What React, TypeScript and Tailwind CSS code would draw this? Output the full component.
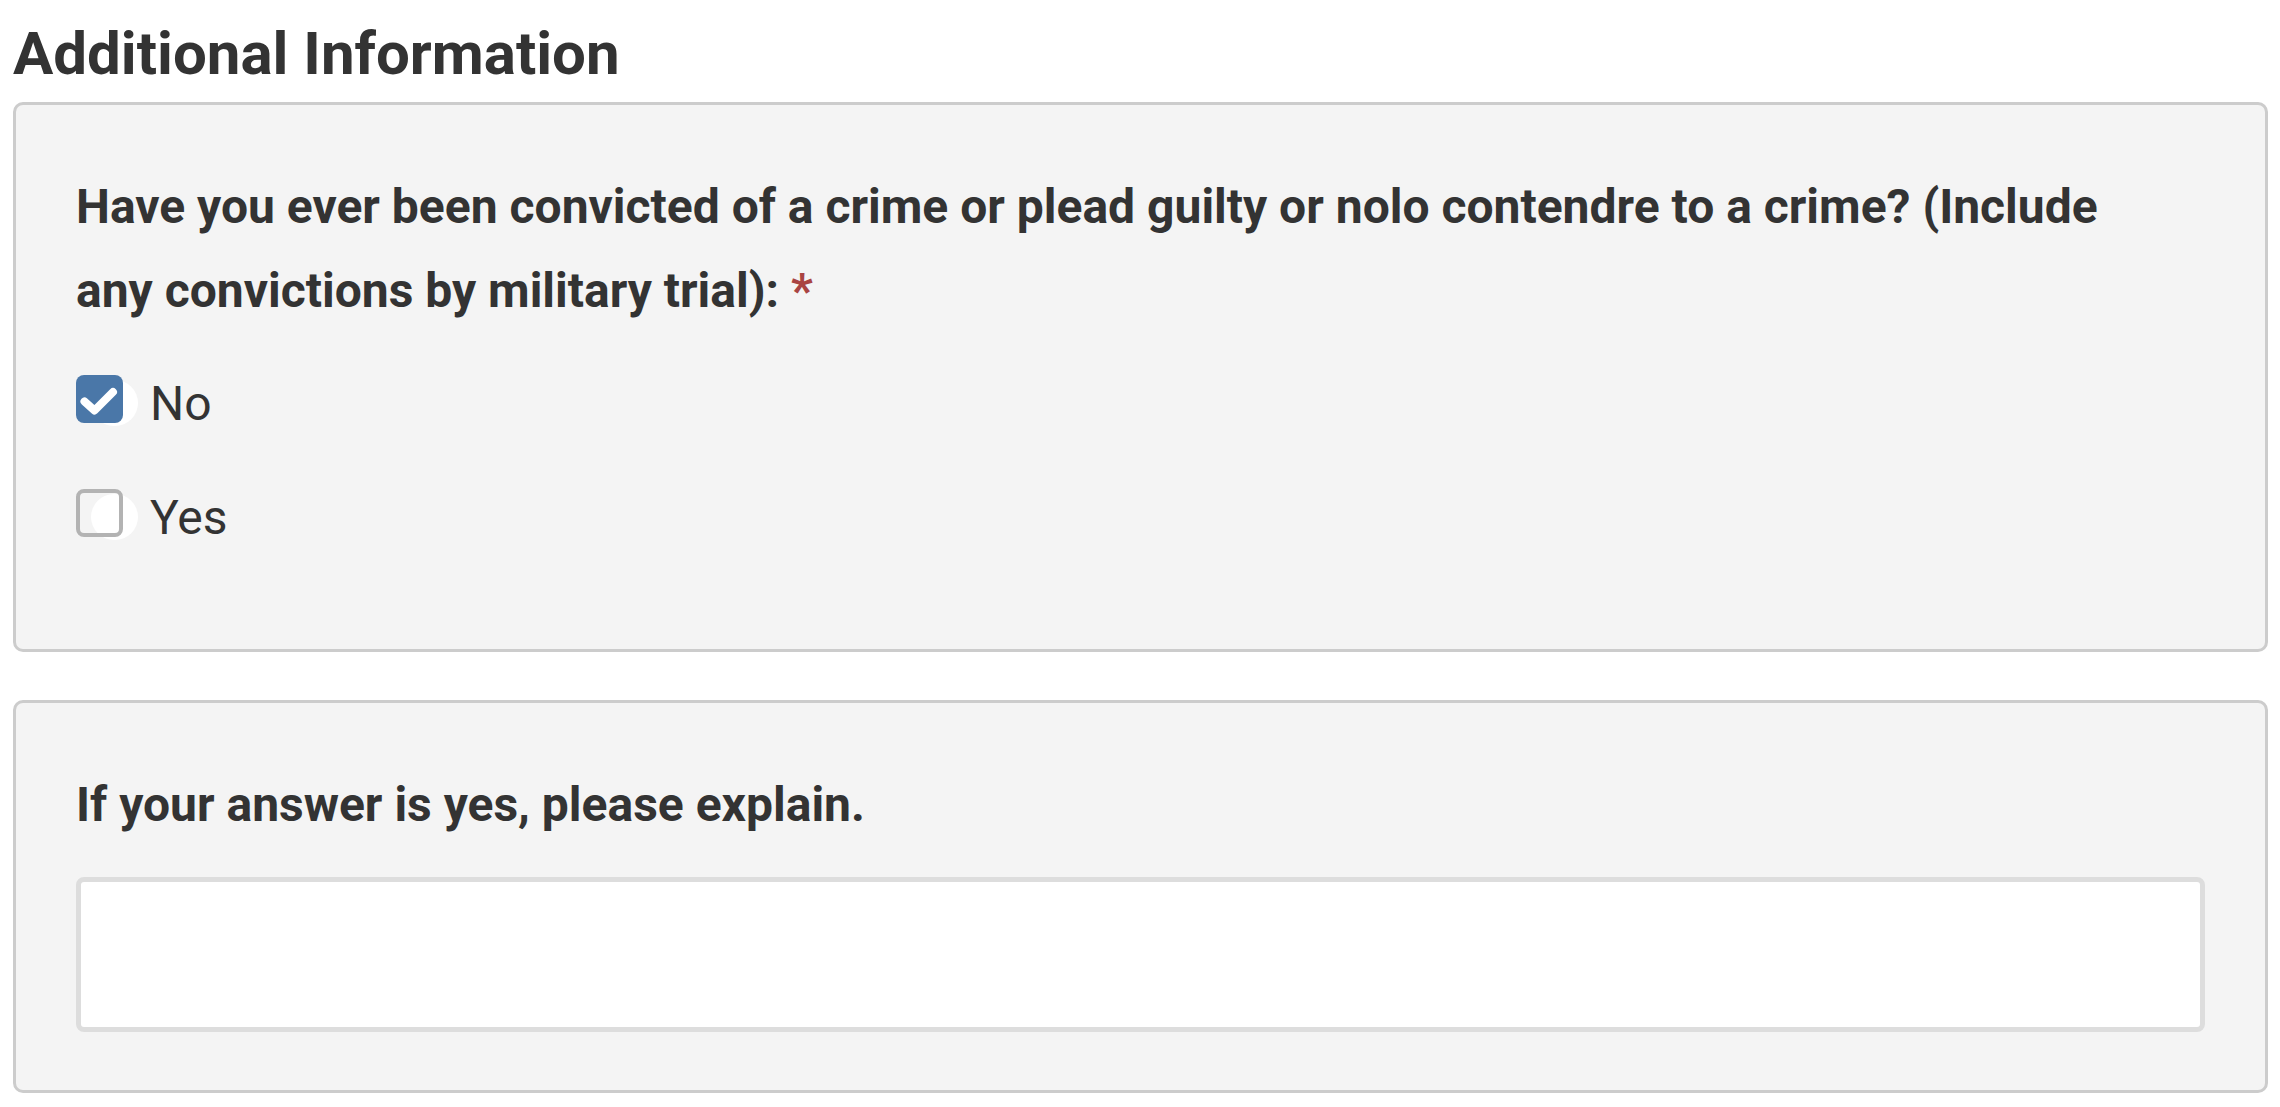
import React, { useState } from 'react';

// --- Kotak centang dengan lingkaran putih di belakangnya ---
function CheckOption({ label, checked, onToggle }: { label: string; checked: boolean; onToggle: () => void }) {
    return (
        <label className="flex items-center h-[48px] cursor-pointer" onClick={onToggle}>
            <span className="relative w-[47px] h-[48px] shrink-0">
                <span className="absolute left-[15px] top-[5px] w-[47px] h-[46px] rounded-full bg-white" />
                {checked ? (
                    <span className="absolute inset-0 rounded-[8px] bg-[#4a77a8] flex items-center justify-center">
                        <svg width="47" height="48" viewBox="0 0 47 48" fill="none">
                            <path d="M8.5 26.5 L18.5 35.5 L37 17" stroke="white" strokeWidth="8" strokeLinecap="round" strokeLinejoin="round" />
                        </svg>
                    </span>
                ) : (
                    <span className="absolute inset-0 rounded-[8px] border-[4px] border-[#b3b3b3]" />
                )}
            </span>
            <span className="ml-[27px] pt-[10px] text-[48px] leading-[56px] text-[#333333]">{label}</span>
        </label>
    );
}

export default function App() {
    const [answer, setAnswer] = useState<'no' | 'yes' | null>('no');
    const [explain, setExplain] = useState('');

    return (
        <div className="min-h-screen bg-white pt-[18px] pl-[13px] pr-[12px] pb-[14px] text-[#333333]" style={{ fontFamily: 'Roboto, "Liberation Sans", sans-serif' }}>
            <h2 className="text-[60px] font-bold leading-[72px] mb-[12px]">Additional Information</h2>

            <div className="border-[3px] border-[#cccccc] rounded-[10px] bg-[#f4f4f4] px-[60px] pt-[60px] pb-[112px]">
                <p className="text-[48px] font-bold leading-[84px] max-w-[2080px]">
                    Have you ever been convicted of a crime or plead guilty or nolo contendre to a crime? (Include any convictions by military trial):{' '}
                    <span className="text-[#a94442]">*</span>
                </p>
                <div className="mt-[42px] flex flex-col gap-[66px]">
                    <CheckOption label="No" checked={answer === 'no'} onToggle={() => setAnswer('no')} />
                    <CheckOption label="Yes" checked={answer === 'yes'} onToggle={() => setAnswer('yes')} />
                </div>
            </div>

            <div className="mt-[48px] border-[3px] border-[#cccccc] rounded-[10px] bg-[#f4f4f4] px-[60px] pt-[74px] pb-[58px]">
                <p className="text-[48px] font-bold leading-[56px]">If your answer is yes, please explain.</p>
                <textarea
                    value={explain}
                    onChange={(e) => setExplain(e.target.value)}
                    className="mt-[44px] block w-full h-[155px] bg-white border-[5px] border-[#dddddd] rounded-[8px] resize-none outline-none p-3 text-[40px]"
                />
            </div>
        </div>
    );
}
